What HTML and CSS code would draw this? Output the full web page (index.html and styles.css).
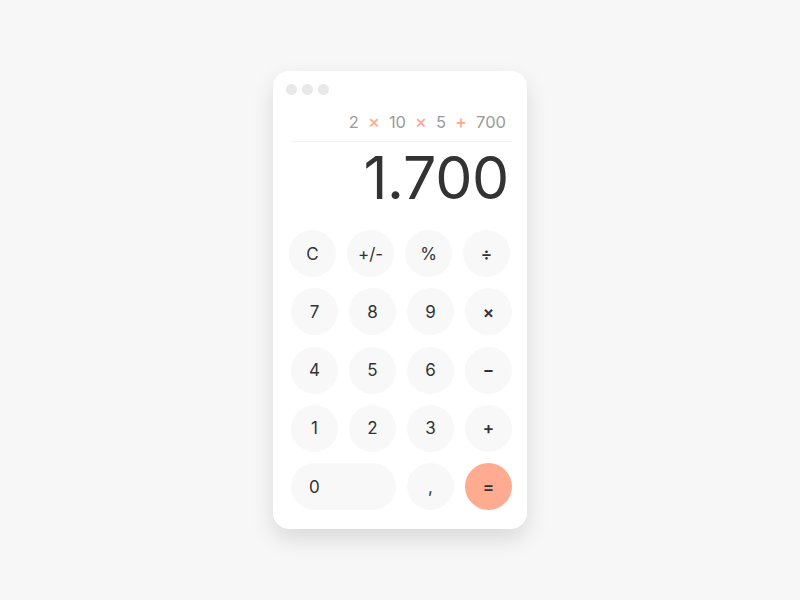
FILE: index.html
```html
<!DOCTYPE html>
<html>
<head>
<meta charset="utf-8">
<link rel="stylesheet" href="styles.css">
</head>
<body>
<div class="card">
  <div class="dots"><span></span><span></span><span></span></div>
  <div class="expr"><span class="num">2</span><span class="op">×</span><span class="num">10</span><span class="op">×</span><span class="num">5</span><span class="op op-plus">+</span><span class="num">700</span></div>
  <div class="divider"></div>
  <div class="result">1.700</div>
  <div class="keys">
    <div class="row row-top">
      <button class="key">C</button>
      <button class="key">+/-</button>
      <button class="key">%</button>
      <button class="key key-op">÷</button>
    </div>
    <div class="row">
      <button class="key">7</button>
      <button class="key">8</button>
      <button class="key">9</button>
      <button class="key key-op">×</button>
    </div>
    <div class="row">
      <button class="key">4</button>
      <button class="key">5</button>
      <button class="key">6</button>
      <button class="key key-op">−</button>
    </div>
    <div class="row">
      <button class="key">1</button>
      <button class="key">2</button>
      <button class="key">3</button>
      <button class="key key-op">+</button>
    </div>
    <div class="row">
      <button class="key key-wide">0</button>
      <button class="key">,</button>
      <button class="key key-eq key-op">=</button>
    </div>
  </div>
</div>
</body>
</html>
```

FILE: styles.css
```css
html, body {
  margin: 0;
  padding: 0;
}
body {
  background: #f7f7f7;
  width: 800px;
  height: 600px;
  font-family: Inter, "Liberation Sans", sans-serif;
  display: flex;
  justify-content: center;
  align-items: flex-start;
}
.card {
  margin-top: 71px;
  width: 254px;
  height: 458px;
  box-sizing: border-box;
  background: #fff;
  border-radius: 16px;
  box-shadow: 0 10px 22px rgba(0, 0, 0, 0.12);
  padding: 13px 15px 0 18px;
}
.dots {
  display: flex;
  gap: 5px;
  margin-left: -5px;
}
.dots span {
  width: 11px;
  height: 11px;
  border-radius: 50%;
  background: #e8e8e8;
}
.expr {
  margin-top: 17px;
  display: flex;
  justify-content: flex-end;
  align-items: baseline;
  font-size: 16.5px;
  color: #9a9a9a;
  line-height: 20px;
  padding-right: 6px;
}
.expr .op {
  color: #ffa98f;
  font-size: 18px;
  font-weight: 500;
  margin: 0 9px;
}
.divider {
  margin-top: 9px;
  height: 1px;
  background: #f3f3f3;
}
.result {
  text-align: right;
  font-size: 59px;
  line-height: 70px;
  color: #333;
  letter-spacing: -0.3px;
  padding-right: 3px;
  margin-top: 1px;
}
.keys {
  margin-top: 17px;
  display: flex;
  flex-direction: column;
  gap: 11.3px;
}
.row {
  display: flex;
  gap: 11px;
}
.row-top {
  margin-left: -2px;
}
.key {
  width: 47px;
  height: 47px;
  border: none;
  border-radius: 24px;
  background: #f8f8f8;
  color: #333;
  font-family: Inter, "Liberation Sans", sans-serif;
  font-size: 17px;
  padding: 0;
  display: flex;
  align-items: center;
  justify-content: center;
}
.key-op {
  font-weight: 600;
}
.key-wide {
  width: 105px;
  justify-content: flex-start;
  padding-left: 18px;
}
.key-eq {
  background: #ffab91;
}
```
